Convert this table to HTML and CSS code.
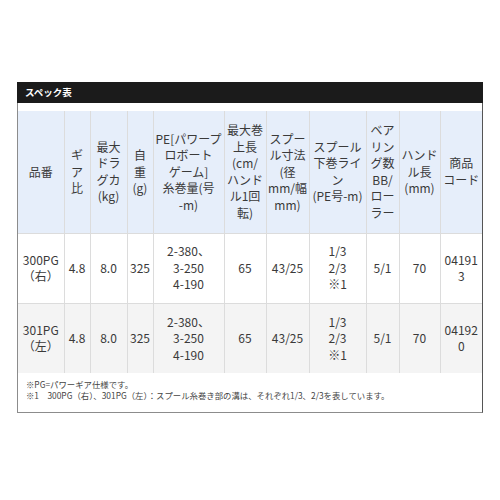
FILE: index.html
```html
<!DOCTYPE html>
<html lang="ja">
<head>
<meta charset="utf-8">
<link rel="stylesheet" href="styles.css">
</head>
<body>
<div class="spec">
  <div class="spec-title">スペック表</div>
  <div class="spec-box">
    <table class="spec-table">
      <colgroup>
        <col class="c1"><col class="c2"><col class="c3"><col class="c4"><col class="c5"><col class="c6"><col class="c7"><col class="c8"><col class="c9"><col class="c10"><col class="c11">
      </colgroup>
      <thead>
        <tr>
          <th>品番</th>
          <th>ギ<br>ア<br>比</th>
          <th>最大<br>ドラ<br>グカ<br>(kg)</th>
          <th>自<br>重<br>(g)</th>
          <th>PE[パワープ<br>ロボート<br>ゲーム]<br>糸巻量(号<br>-m)</th>
          <th>最大巻<br>上長<br>(cm/<br>ハンド<br>ル1回<br>転)</th>
          <th>スプー<br>ル寸法<br>(径<br>mm/幅<br>mm)</th>
          <th>スプール<br>下巻ライ<br>ン<br>(PE号-m)</th>
          <th>ベア<br>リン<br>グ数<br>BB/<br>ロー<br>ラー</th>
          <th>ハンド<br>ル長<br>(mm)</th>
          <th>商品<br>コード</th>
        </tr>
      </thead>
      <tbody>
        <tr>
          <td>300PG<br>（右）</td>
          <td>4.8</td>
          <td>8.0</td>
          <td>325</td>
          <td>2-380、<br>3-250<br>4-190</td>
          <td>65</td>
          <td>43/25</td>
          <td>1/3<br>2/3<br>※1</td>
          <td>5/1</td>
          <td>70</td>
          <td>04191<br>3</td>
        </tr>
        <tr class="alt">
          <td>301PG<br>（左）</td>
          <td>4.8</td>
          <td>8.0</td>
          <td>325</td>
          <td>2-380、<br>3-250<br>4-190</td>
          <td>65</td>
          <td>43/25</td>
          <td>1/3<br>2/3<br>※1</td>
          <td>5/1</td>
          <td>70</td>
          <td>04192<br>0</td>
        </tr>
      </tbody>
    </table>
    <div class="spec-notes">
      <p>※PG=パワーギア仕様です。</p>
      <p>※1　300PG（右）、301PG（左）：スプール糸巻き部の溝は、それぞれ1/3、2/3を表しています。</p>
    </div>
  </div>
</div>
</body>
</html>
```

FILE: styles.css
```css
html, body {
  margin: 0;
  padding: 0;
  background: #ffffff;
}
body {
  padding: 82px 17px 0 17px;
  font-family: "Noto Sans CJK JP", "Noto Sans", sans-serif;
  color: #333333;
}
.spec {
  width: 466px;
}
.spec-title {
  height: 21px;
  background: #1b1b1b;
  color: #ffffff;
  font-size: 9.5px;
  font-weight: bold;
  line-height: 21px;
  padding-left: 8px;
}
.spec-box {
  border: 1px solid #8c8c8c;
  border-top: none;
  border-right-color: #555555;
  padding-top: 8px;
}
.spec-table {
  width: 464px;
  table-layout: fixed;
  border-collapse: collapse;
  border-style: hidden;
  font-size: 12px;
  line-height: 16.5px;
}
.c1 { width: 46px; }
.c2 { width: 26px; }
.c3 { width: 37px; }
.c4 { width: 26px; }
.c5 { width: 71px; }
.c6 { width: 42px; }
.c7 { width: 43px; }
.c8 { width: 57px; }
.c9 { width: 33px; }
.c10 { width: 41px; }
.c11 { width: 42px; }
.spec-table th,
.spec-table td {
  border: 1px solid #dcdcdc;
  text-align: center;
  vertical-align: middle;
  padding: 0;
  font-weight: normal;
  color: #3a3a3a;
  white-space: nowrap;
}
.spec-table thead tr {
  height: 122px;
  background: #e6eefa;
}
.spec-table tbody tr {
  height: 70px;
  background: #ffffff;
}
.spec-table tbody tr.alt {
  background: #f4f4f4;
}
.spec-notes {
  padding: 6px 8px 11px 8px;
  font-size: 8.4px;
  line-height: 11px;
  color: #444444;
}
.spec-notes p {
  margin: 0;
}
```
